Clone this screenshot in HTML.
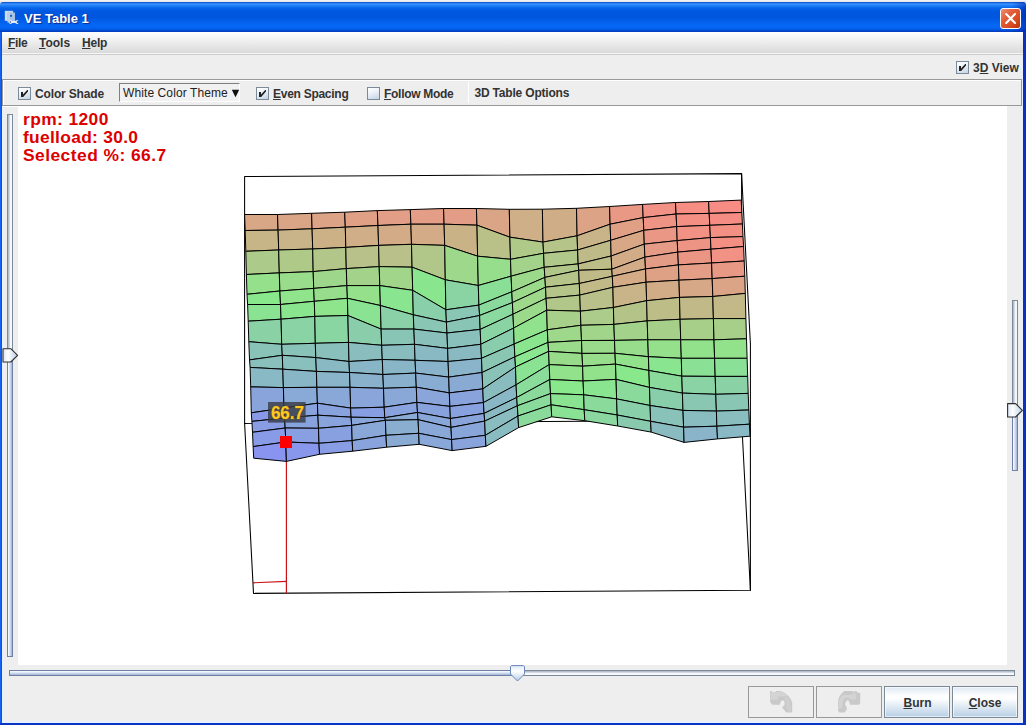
<!DOCTYPE html>
<html><head><meta charset="utf-8"><title>VE Table 1</title>
<style>
html,body{margin:0;padding:0;}
body{width:1026px;height:725px;overflow:hidden;position:relative;background:#0b3fd0;
 font-family:"Liberation Sans",sans-serif;font-size:12px;color:#333;}
.abs{position:absolute;}
#topstrip{left:0;top:0;width:1026px;height:9px;background:linear-gradient(#f6f6f6 0,#e4e4e4 2px,#e8eefc 3px,#e8eefc 9px);}
#title{left:0;top:2px;width:1026px;height:30px;border-radius:3px 3px 0 0;
 background:linear-gradient(#0a4ac4 0%,#1f6ee8 3%,#3993ff 7%,#2280f8 12%,#0665ea 20%,#0058e0 30%,#0056de 50%,#035fea 65%,#0468f6 78%,#0462ee 88%,#0350d8 94%,#0238b8 100%);}
#ttext{left:24px;top:11px;font-size:13px;color:#fff;white-space:nowrap;text-shadow:1px 1px 1px #0a2a8c;line-height:15px;font-weight:bold;}
#close{left:1000px;top:8px;width:19px;height:19px;border:1px solid #fff;border-radius:3px;
 background:linear-gradient(135deg,#ee8f74 0%,#e2603c 35%,#d84a22 70%,#b8300c 100%);}
#lborder{left:0;top:32px;width:2px;height:693px;background:linear-gradient(90deg,#1a6af8,#0a4ad0);}
#llight{left:2px;top:32px;width:1px;height:689px;background:#e4f2ff;}
#rborder{left:1023px;top:32px;width:3px;height:693px;background:#0a30c0;}
#bborder{left:0;top:723px;width:1026px;height:2px;background:#0a35c4;}
#content{left:2px;top:32px;width:1021px;height:691px;background:#eeeeee;}
#rlight{left:1020px;top:32px;width:3px;height:691px;background:linear-gradient(90deg,#eeeeee,#e6f0ff);}
#blight{left:2px;top:721px;width:1021px;height:2px;background:#e6f0ff;}
#menubar{left:2px;top:32px;width:1021px;height:21px;background:linear-gradient(#ffffff,#dadada);}
#menusep{left:2px;top:53px;width:1021px;height:2px;background:linear-gradient(#f6f6f6 50%,#cccccc 50%);}
.menu{top:36px;font-weight:bold;font-size:12px;line-height:14px;white-space:nowrap;color:#333;}
.u{text-decoration:underline;}
.lbl{font-weight:bold;font-size:12px;line-height:14px;white-space:nowrap;color:#333;}
.cb{width:11px;height:11px;border:1px solid #7a8a99;background:linear-gradient(160deg,#ffffff 0%,#eef3f9 40%,#c3d3e4 100%);}
#toolbar{left:2px;top:79px;width:1020px;height:27px;border:1px solid #989898;box-sizing:border-box;box-shadow:inset 0 1px 0 #fff, inset 1px 0 0 #fff;}
#combo{left:119px;top:83px;width:121px;height:19px;box-sizing:border-box;border-top:1px solid #7f7f7f;border-left:1px solid #7f7f7f;border-right:1px solid #fff;border-bottom:1px solid #fff;background:#f1f1f1;}
#combotext{left:123px;top:86px;font-size:12px;line-height:14px;white-space:nowrap;color:#222;letter-spacing:0.1px;}
#canvas{left:18px;top:106px;width:989px;height:559px;background:#fff;}
.btn{top:686px;width:64px;height:30px;border:1px solid #7a8a99;font-weight:bold;font-size:12px;text-align:center;line-height:32px;
 background:linear-gradient(#dfe9f4 0%,#ffffff 30%,#ffffff 38%,#b8cfe5 100%);box-shadow:inset 0 0 0 1px rgba(255,255,255,0.6);}
.btnd{top:686px;width:64px;height:30px;border:1px solid #999;background:#eeeeee;}
svg{position:absolute;left:0;top:0;}
.info{left:23px;font-weight:bold;font-size:17.4px;line-height:18px;color:#dc0000;white-space:nowrap;}
#tright{left:1012px;top:2px;width:14px;height:30px;border-radius:0 3px 0 0;background:linear-gradient(90deg,rgba(0,30,160,0),rgba(0,30,160,0.55));}

</style></head>
<body>
<div class="abs" id="topstrip"></div>
<div class="abs" id="title"></div>
<div class="abs" id="ttext">VE Table 1</div>
<div class="abs" id="tright"></div>
<div class="abs" id="close"></div>
<div class="abs" id="content"></div>
<div class="abs" id="rlight"></div>
<div class="abs" id="blight"></div>
<div class="abs" id="llight"></div>
<div class="abs" id="lborder"></div>
<div class="abs" id="rborder"></div>
<div class="abs" id="bborder"></div>
<div class="abs" id="menubar"></div>
<div class="abs" id="menusep"></div>
<div class="abs menu" style="left:8px;letter-spacing:-0.3px"><span class="u">F</span>ile</div>
<div class="abs menu" style="left:39px"><span class="u">T</span>ools</div>
<div class="abs menu" style="left:82px;letter-spacing:-0.2px"><span class="u">H</span>elp</div>

<div class="abs cb" style="left:956px;top:61px"></div>
<div class="abs lbl" id="l3d" style="left:973px;top:61px">3<span class="u">D</span> View</div>

<div class="abs" id="toolbar"></div>
<div class="abs cb" style="left:18px;top:87px"></div>
<div class="abs lbl" id="lcs" style="left:35px;top:87px;letter-spacing:-0.15px">Color Shade</div>
<div class="abs" id="combo"></div>
<div class="abs" id="combotext">White Color Theme</div>
<div class="abs cb" style="left:256px;top:87px"></div>
<div class="abs lbl" id="les" style="left:273px;top:87px;letter-spacing:-0.27px"><span class="u">E</span>ven Spacing</div>
<div class="abs cb" style="left:367px;top:87px"></div>
<div class="abs lbl" id="lfm" style="left:384px;top:87px;letter-spacing:-0.29px"><span class="u">F</span>ollow Mode</div>
<div class="abs" style="left:468px;top:82px;width:1px;height:21px;background:#fff"></div>
<div class="abs lbl" id="lopt" style="left:474.5px;top:86px;letter-spacing:-0.19px">3D Table Options</div>

<div class="abs" id="canvas"></div>
<div class="abs" style="left:3px;top:106px;width:15px;height:1px;background:#fff"></div>
<div class="abs info" id="i1" style="top:110px;letter-spacing:0.4px">rpm: 1200</div>
<div class="abs info" id="i2" style="top:128px;letter-spacing:0.3px">fuelload: 30.0</div>
<div class="abs info" id="i3" style="top:146px;letter-spacing:0.46px">Selected %: 66.7</div>

<div class="abs btnd" style="left:748px"></div>
<div class="abs btnd" style="left:816px"></div>
<div class="abs btn" style="left:884px;text-indent:1px"><span class="u">B</span>urn</div>
<div class="abs btn" style="left:952px"><span class="u">C</span>lose</div>

<svg width="1026" height="725" viewBox="0 0 1026 725">
<defs>
 <linearGradient id="gth" x1="0" y1="0" x2="1" y2="0"><stop offset="0" stop-color="#dbe6f3"/><stop offset="0.35" stop-color="#ffffff"/><stop offset="1" stop-color="#b8cfe5"/></linearGradient>
 <linearGradient id="gtv" x1="0" y1="0" x2="0" y2="1"><stop offset="0" stop-color="#dbe6f3"/><stop offset="0.35" stop-color="#ffffff"/><stop offset="1" stop-color="#b8cfe5"/></linearGradient>
 <linearGradient id="gfh" x1="0" y1="0" x2="1" y2="0"><stop offset="0" stop-color="#ffffff"/><stop offset="0.35" stop-color="#e6eefa"/><stop offset="1" stop-color="#93a8cf"/></linearGradient>
 <linearGradient id="gfv" x1="0" y1="0" x2="0" y2="1"><stop offset="0" stop-color="#ffffff"/><stop offset="0.35" stop-color="#e6eefa"/><stop offset="1" stop-color="#93a8cf"/></linearGradient>
</defs>

<!-- box behind mesh -->
<g fill="none" stroke="#000" stroke-width="1.05" stroke-linecap="round" stroke-linejoin="round">
 <path d="M244.6,423.4 L244.6,176.5 L741.6,173.6 L741.6,420"/>
 <path d="M244.6,423.4 L741.6,420.2"/>
 <path d="M244.6,423.4 L253.5,593.4 L750.4,590.2 L741.6,420.2"/>
 <path d="M741.6,173.6 L750.4,344 L750.4,590.2"/>
</g>
<!-- red drop lines -->
<g>
 <path d="M286.4,442 L286.4,593.2" stroke="#c81414" stroke-width="1.2" fill="none"/>
 <path d="M252.9,582.8 L286.4,581.3" stroke="#c81414" stroke-width="1.2" fill="none"/>
</g>
<!-- mesh -->
<g stroke="#000" stroke-width="1.0" stroke-linejoin="round">
<polygon points="244.6,214.5 277.5,214.5 278.1,230.1 245.2,230.5" fill="rgb(216,167,134)"/>
<polygon points="277.5,214.5 311.6,213.3 312.1,228.8 278.1,230.1" fill="rgb(217,165,134)"/>
<polygon points="311.6,213.3 344.7,212.2 345.3,227.2 312.1,228.8" fill="rgb(220,163,134)"/>
<polygon points="344.7,212.2 377.3,210.6 378.0,225.5 345.3,227.2" fill="rgb(223,160,134)"/>
<polygon points="377.3,210.6 410.3,209.6 410.9,224.2 378.0,225.5" fill="rgb(226,158,134)"/>
<polygon points="410.3,209.6 443.6,208.5 444.1,224.2 410.9,224.2" fill="rgb(228,157,134)"/>
<polygon points="443.6,208.5 476.4,208.5 477.0,225.2 444.1,224.2" fill="rgb(227,157,134)"/>
<polygon points="476.4,208.5 509.3,209.3 509.9,237.2 477.0,225.2" fill="rgb(218,165,134)"/>
<polygon points="509.3,209.3 542.4,209.2 543.0,242.1 509.9,237.2" fill="rgb(206,175,135)"/>
<polygon points="542.4,209.2 576.5,208.3 577.1,235.8 543.0,242.1" fill="rgb(207,174,135)"/>
<polygon points="576.5,208.3 609.6,206.5 610.1,224.2 577.1,235.8" fill="rgb(220,163,134)"/>
<polygon points="609.6,206.5 642.6,204.4 643.2,217.6 610.1,224.2" fill="rgb(233,152,133)"/>
<polygon points="642.6,204.4 675.5,202.5 676.1,214.0 643.2,217.6" fill="rgb(242,145,133)"/>
<polygon points="675.5,202.5 708.6,201.5 709.2,213.4 676.1,214.0" fill="rgb(246,142,132)"/>
<polygon points="708.6,201.5 741.2,200.1 741.8,212.5 709.2,213.4" fill="rgb(247,140,132)"/>
<polygon points="245.2,230.5 278.1,230.1 278.7,250.0 245.8,251.3" fill="rgb(199,181,136)"/>
<polygon points="278.1,230.1 312.1,228.8 312.7,249.0 278.7,250.0" fill="rgb(201,179,136)"/>
<polygon points="312.1,228.8 345.3,227.2 345.8,247.4 312.7,249.0" fill="rgb(204,177,135)"/>
<polygon points="345.3,227.2 378.0,225.5 378.6,245.4 345.8,247.4" fill="rgb(208,174,135)"/>
<polygon points="378.0,225.5 410.9,224.2 411.5,244.3 378.6,245.4" fill="rgb(211,171,135)"/>
<polygon points="410.9,224.2 444.1,224.2 444.7,245.4 411.5,244.3" fill="rgb(211,171,135)"/>
<polygon points="444.1,224.2 477.0,225.2 477.6,256.2 444.7,245.4" fill="rgb(202,178,135)"/>
<polygon points="477.0,225.2 509.9,237.2 510.5,259.3 477.6,256.2" fill="rgb(185,193,137)"/>
<polygon points="509.9,237.2 543.0,242.1 543.6,253.3 510.5,259.3" fill="rgb(175,201,137)"/>
<polygon points="543.0,242.1 577.1,235.8 577.6,250.0 543.6,253.3" fill="rgb(181,196,137)"/>
<polygon points="577.1,235.8 610.1,224.2 610.7,240.3 577.6,250.0" fill="rgb(200,180,136)"/>
<polygon points="610.1,224.2 643.2,217.6 643.8,230.3 610.7,240.3" fill="rgb(224,160,134)"/>
<polygon points="643.2,217.6 676.1,214.0 676.7,226.6 643.8,230.3" fill="rgb(239,147,133)"/>
<polygon points="676.1,214.0 709.2,213.4 709.8,225.3 676.7,226.6" fill="rgb(244,143,132)"/>
<polygon points="709.2,213.4 741.8,212.5 742.4,224.0 709.8,225.3" fill="rgb(246,141,132)"/>
<polygon points="245.8,251.3 278.7,250.0 279.3,272.9 246.4,274.5" fill="rgb(172,203,138)"/>
<polygon points="278.7,250.0 312.7,249.0 313.2,271.6 279.3,272.9" fill="rgb(175,201,137)"/>
<polygon points="312.7,249.0 345.8,247.4 346.3,268.6 313.2,271.6" fill="rgb(179,198,137)"/>
<polygon points="345.8,247.4 378.6,245.4 379.2,266.6 346.3,268.6" fill="rgb(184,193,137)"/>
<polygon points="378.6,245.4 411.5,244.3 412.1,267.2 379.2,266.6" fill="rgb(186,192,137)"/>
<polygon points="411.5,244.3 444.7,245.4 445.3,279.8 412.1,267.2" fill="rgb(177,199,137)"/>
<polygon points="444.7,245.4 477.6,256.2 478.3,285.5 445.3,279.8" fill="rgb(157,216,139)"/>
<polygon points="477.6,256.2 510.5,259.3 511.1,276.2 478.3,285.5" fill="rgb(150,222,139)"/>
<polygon points="510.5,259.3 543.6,253.3 544.2,267.3 511.1,276.2" fill="rgb(163,211,138)"/>
<polygon points="543.6,253.3 577.6,250.0 578.2,263.9 544.2,267.3" fill="rgb(176,200,137)"/>
<polygon points="577.6,250.0 610.7,240.3 611.2,256.0 578.2,263.9" fill="rgb(191,187,136)"/>
<polygon points="610.7,240.3 643.8,230.3 644.3,244.1 611.2,256.0" fill="rgb(216,167,134)"/>
<polygon points="643.8,230.3 676.7,226.6 677.2,240.6 644.3,244.1" fill="rgb(234,152,133)"/>
<polygon points="676.7,226.6 709.8,225.3 710.4,237.6 677.2,240.6" fill="rgb(241,146,133)"/>
<polygon points="709.8,225.3 742.4,224.0 743.0,236.6 710.4,237.6" fill="rgb(244,143,132)"/>
<polygon points="246.4,274.5 279.3,272.9 279.9,291.0 247.0,294.3" fill="rgb(148,224,139)"/>
<polygon points="279.3,272.9 313.2,271.6 313.7,288.4 279.9,291.0" fill="rgb(153,220,139)"/>
<polygon points="313.2,271.6 346.3,268.6 346.9,285.6 313.7,288.4" fill="rgb(158,215,139)"/>
<polygon points="346.3,268.6 379.2,266.6 379.8,285.6 346.9,285.6" fill="rgb(163,211,138)"/>
<polygon points="379.2,266.6 412.1,267.2 412.7,290.3 379.8,285.6" fill="rgb(160,213,138)"/>
<polygon points="412.1,267.2 445.3,279.8 445.9,309.8 412.7,290.3" fill="rgb(138,230,142)"/>
<polygon points="445.3,279.8 478.3,285.5 478.9,305.1 445.9,309.8" fill="rgb(138,212,163)"/>
<polygon points="478.3,285.5 511.1,276.2 511.8,291.8 478.9,305.1" fill="rgb(138,223,150)"/>
<polygon points="511.1,276.2 544.2,267.3 544.9,277.4 511.8,291.8" fill="rgb(156,217,139)"/>
<polygon points="544.2,267.3 578.2,263.9 578.7,270.3 544.9,277.4" fill="rgb(177,199,137)"/>
<polygon points="578.2,263.9 611.2,256.0 611.8,269.2 578.7,270.3" fill="rgb(189,189,136)"/>
<polygon points="611.2,256.0 644.3,244.1 644.9,257.1 611.8,269.2" fill="rgb(209,172,135)"/>
<polygon points="644.3,244.1 677.2,240.6 677.8,252.1 644.9,257.1" fill="rgb(229,155,133)"/>
<polygon points="677.2,240.6 710.4,237.6 711.0,249.2 677.8,252.1" fill="rgb(238,148,133)"/>
<polygon points="710.4,237.6 743.0,236.6 743.6,246.5 711.0,249.2" fill="rgb(244,143,132)"/>
<polygon points="247.0,294.3 279.9,291.0 280.5,304.5 247.6,304.5" fill="rgb(138,232,140)"/>
<polygon points="279.9,291.0 313.7,288.4 314.3,301.3 280.5,304.5" fill="rgb(143,228,140)"/>
<polygon points="313.7,288.4 346.9,285.6 347.4,298.3 314.3,301.3" fill="rgb(150,222,139)"/>
<polygon points="346.9,285.6 379.8,285.6 380.4,305.5 347.4,298.3" fill="rgb(148,224,139)"/>
<polygon points="379.8,285.6 412.7,290.3 413.3,314.8 380.4,305.5" fill="rgb(138,229,144)"/>
<polygon points="412.7,290.3 445.9,309.8 446.4,322.1 413.3,314.8" fill="rgb(137,207,170)"/>
<polygon points="445.9,309.8 478.9,305.1 479.6,315.5 446.4,322.1" fill="rgb(137,198,180)"/>
<polygon points="478.9,305.1 511.8,291.8 512.4,302.6 479.6,315.5" fill="rgb(138,217,157)"/>
<polygon points="511.8,291.8 544.9,277.4 545.5,287.2 512.4,302.6" fill="rgb(155,217,139)"/>
<polygon points="544.9,277.4 578.7,270.3 579.3,283.5 545.5,287.2" fill="rgb(181,196,137)"/>
<polygon points="578.7,270.3 611.8,269.2 612.3,276.3 579.3,283.5" fill="rgb(192,186,136)"/>
<polygon points="611.8,269.2 644.9,257.1 645.5,268.9 612.3,276.3" fill="rgb(209,172,135)"/>
<polygon points="644.9,257.1 677.8,252.1 678.4,264.9 645.5,268.9" fill="rgb(227,157,134)"/>
<polygon points="677.8,252.1 711.0,249.2 711.6,263.0 678.4,264.9" fill="rgb(235,150,133)"/>
<polygon points="711.0,249.2 743.6,246.5 744.2,261.0 711.6,263.0" fill="rgb(241,146,133)"/>
<polygon points="247.6,304.5 280.5,304.5 281.1,319.2 248.2,321.2" fill="rgb(138,227,146)"/>
<polygon points="280.5,304.5 314.3,301.3 314.8,316.4 281.1,319.2" fill="rgb(138,230,142)"/>
<polygon points="314.3,301.3 347.4,298.3 347.9,315.5 314.8,316.4" fill="rgb(142,229,140)"/>
<polygon points="347.4,298.3 380.4,305.5 381.1,329.1 347.9,315.5" fill="rgb(138,226,147)"/>
<polygon points="380.4,305.5 413.3,314.8 413.9,329.1 381.1,329.1" fill="rgb(138,209,167)"/>
<polygon points="413.3,314.8 446.4,322.1 447.0,333.0 413.9,329.1" fill="rgb(137,198,180)"/>
<polygon points="446.4,322.1 479.6,315.5 480.2,329.4 447.0,333.0" fill="rgb(137,197,181)"/>
<polygon points="479.6,315.5 512.4,302.6 513.0,314.2 480.2,329.4" fill="rgb(138,217,158)"/>
<polygon points="512.4,302.6 545.5,287.2 546.1,298.3 513.0,314.2" fill="rgb(157,216,139)"/>
<polygon points="545.5,287.2 579.3,283.5 579.8,295.1 546.1,298.3" fill="rgb(181,196,137)"/>
<polygon points="579.3,283.5 612.3,276.3 612.9,287.3 579.8,295.1" fill="rgb(194,185,136)"/>
<polygon points="612.3,276.3 645.5,268.9 646.1,282.2 612.9,287.3" fill="rgb(211,171,135)"/>
<polygon points="645.5,268.9 678.4,264.9 679.0,280.2 646.1,282.2" fill="rgb(222,161,134)"/>
<polygon points="678.4,264.9 711.6,263.0 712.2,278.6 679.0,280.2" fill="rgb(228,157,134)"/>
<polygon points="711.6,263.0 744.2,261.0 744.8,276.2 712.2,278.6" fill="rgb(232,153,133)"/>
<polygon points="248.2,321.2 281.1,319.2 281.7,344.3 248.8,341.7" fill="rgb(138,210,166)"/>
<polygon points="281.1,319.2 314.8,316.4 315.3,343.3 281.7,344.3" fill="rgb(138,211,164)"/>
<polygon points="314.8,316.4 347.9,315.5 348.5,342.4 315.3,343.3" fill="rgb(138,214,162)"/>
<polygon points="347.9,315.5 381.1,329.1 381.7,345.3 348.5,342.4" fill="rgb(137,205,171)"/>
<polygon points="381.1,329.1 413.9,329.1 414.5,344.3 381.7,345.3" fill="rgb(137,197,181)"/>
<polygon points="413.9,329.1 447.0,333.0 447.6,348.4 414.5,344.3" fill="rgb(137,193,186)"/>
<polygon points="447.0,333.0 480.2,329.4 480.8,344.3 447.6,348.4" fill="rgb(137,192,187)"/>
<polygon points="480.2,329.4 513.0,314.2 513.6,328.1 480.8,344.3" fill="rgb(138,212,163)"/>
<polygon points="513.0,314.2 546.1,298.3 546.7,310.2 513.6,328.1" fill="rgb(155,218,139)"/>
<polygon points="546.1,298.3 579.8,295.1 580.4,311.2 546.7,310.2" fill="rgb(177,199,137)"/>
<polygon points="579.8,295.1 612.9,287.3 613.4,307.5 580.4,311.2" fill="rgb(185,192,137)"/>
<polygon points="612.9,287.3 646.1,282.2 646.6,300.7 613.4,307.5" fill="rgb(200,180,136)"/>
<polygon points="646.1,282.2 679.0,280.2 679.5,297.4 646.6,300.7" fill="rgb(210,172,135)"/>
<polygon points="679.0,280.2 712.2,278.6 712.8,296.5 679.5,297.4" fill="rgb(214,168,135)"/>
<polygon points="712.2,278.6 744.8,276.2 745.3,293.4 712.8,296.5" fill="rgb(219,164,134)"/>
<polygon points="248.8,341.7 281.7,344.3 282.3,355.3 249.5,359.9" fill="rgb(137,195,184)"/>
<polygon points="281.7,344.3 315.3,343.3 315.8,357.6 282.3,355.3" fill="rgb(137,194,184)"/>
<polygon points="315.3,343.3 348.5,342.4 349.0,361.5 315.8,357.6" fill="rgb(137,192,187)"/>
<polygon points="348.5,342.4 381.7,345.3 382.3,359.5 349.0,361.5" fill="rgb(137,189,190)"/>
<polygon points="381.7,345.3 414.5,344.3 415.1,360.3 382.3,359.5" fill="rgb(137,188,191)"/>
<polygon points="414.5,344.3 447.6,348.4 448.1,361.5 415.1,360.3" fill="rgb(137,185,195)"/>
<polygon points="447.6,348.4 480.8,344.3 481.5,358.3 448.1,361.5" fill="rgb(137,186,194)"/>
<polygon points="480.8,344.3 513.6,328.1 514.2,344.0 481.5,358.3" fill="rgb(137,205,172)"/>
<polygon points="513.6,328.1 546.7,310.2 547.3,329.8 514.2,344.0" fill="rgb(145,226,140)"/>
<polygon points="546.7,310.2 580.4,311.2 580.9,325.3 547.3,329.8" fill="rgb(167,208,138)"/>
<polygon points="580.4,311.2 613.4,307.5 613.9,324.4 580.9,325.3" fill="rgb(171,204,138)"/>
<polygon points="613.4,307.5 646.6,300.7 647.2,320.9 613.9,324.4" fill="rgb(180,196,137)"/>
<polygon points="646.6,300.7 679.5,297.4 680.1,319.3 647.2,320.9" fill="rgb(189,189,136)"/>
<polygon points="679.5,297.4 712.8,296.5 713.4,318.6 680.1,319.3" fill="rgb(193,186,136)"/>
<polygon points="712.8,296.5 745.3,293.4 745.9,318.6 713.4,318.6" fill="rgb(195,184,136)"/>
<polygon points="249.5,359.9 282.3,355.3 282.8,369.2 250.1,367.4" fill="rgb(137,192,187)"/>
<polygon points="282.3,355.3 315.8,357.6 316.4,371.4 282.8,369.2" fill="rgb(137,191,189)"/>
<polygon points="315.8,357.6 349.0,361.5 349.5,372.5 316.4,371.4" fill="rgb(137,185,195)"/>
<polygon points="349.0,361.5 382.3,359.5 382.9,374.5 349.5,372.5" fill="rgb(137,182,199)"/>
<polygon points="382.3,359.5 415.1,360.3 415.7,373.1 382.9,374.5" fill="rgb(137,182,199)"/>
<polygon points="415.1,360.3 448.1,361.5 448.7,377.1 415.7,373.1" fill="rgb(137,179,202)"/>
<polygon points="448.1,361.5 481.5,358.3 482.1,372.5 448.7,377.1" fill="rgb(137,180,201)"/>
<polygon points="481.5,358.3 514.2,344.0 514.9,356.8 482.1,372.5" fill="rgb(137,199,179)"/>
<polygon points="514.2,344.0 547.3,329.8 548.0,342.4 514.9,356.8" fill="rgb(138,229,143)"/>
<polygon points="547.3,329.8 580.9,325.3 581.5,340.5 548.0,342.4" fill="rgb(157,216,139)"/>
<polygon points="580.9,325.3 613.9,324.4 614.5,340.4 581.5,340.5" fill="rgb(161,213,138)"/>
<polygon points="613.9,324.4 647.2,320.9 647.8,339.8 614.5,340.4" fill="rgb(163,211,138)"/>
<polygon points="647.2,320.9 680.1,319.3 680.7,339.8 647.8,339.8" fill="rgb(166,208,138)"/>
<polygon points="680.1,319.3 713.4,318.6 714.0,339.8 680.7,339.8" fill="rgb(167,207,138)"/>
<polygon points="713.4,318.6 745.9,318.6 746.5,338.8 714.0,339.8" fill="rgb(168,207,138)"/>
<polygon points="250.1,367.4 282.8,369.2 283.4,387.6 250.7,386.9" fill="rgb(137,185,196)"/>
<polygon points="282.8,369.2 316.4,371.4 316.9,387.3 283.4,387.6" fill="rgb(137,182,199)"/>
<polygon points="316.4,371.4 349.5,372.5 350.1,387.3 316.9,387.3" fill="rgb(137,180,201)"/>
<polygon points="349.5,372.5 382.9,374.5 383.5,388.3 350.1,387.3" fill="rgb(137,177,204)"/>
<polygon points="382.9,374.5 415.7,373.1 416.3,387.2 383.5,388.3" fill="rgb(137,176,205)"/>
<polygon points="415.7,373.1 448.7,377.1 449.3,392.9 416.3,387.2" fill="rgb(137,172,210)"/>
<polygon points="448.7,377.1 482.1,372.5 482.8,388.9 449.3,392.9" fill="rgb(137,171,211)"/>
<polygon points="482.1,372.5 514.9,356.8 515.5,367.0 482.8,388.9" fill="rgb(137,195,184)"/>
<polygon points="514.9,356.8 548.0,342.4 548.6,351.4 515.5,367.0" fill="rgb(138,230,143)"/>
<polygon points="548.0,342.4 581.5,340.5 582.0,353.4 548.6,351.4" fill="rgb(154,219,139)"/>
<polygon points="581.5,340.5 614.5,340.4 615.0,353.3 582.0,353.4" fill="rgb(153,219,139)"/>
<polygon points="614.5,340.4 647.8,339.8 648.4,356.7 615.0,353.3" fill="rgb(151,221,139)"/>
<polygon points="647.8,339.8 680.7,339.8 681.3,358.3 648.4,356.7" fill="rgb(148,224,139)"/>
<polygon points="680.7,339.8 714.0,339.8 714.6,358.3 681.3,358.3" fill="rgb(146,225,139)"/>
<polygon points="714.0,339.8 746.5,338.8 747.1,358.3 714.6,358.3" fill="rgb(146,225,139)"/>
<polygon points="250.7,386.9 283.4,387.6 284.0,408.0 251.3,412.8" fill="rgb(137,164,219)"/>
<polygon points="283.4,387.6 316.9,387.3 317.4,403.2 284.0,408.0" fill="rgb(137,169,214)"/>
<polygon points="316.9,387.3 350.1,387.3 350.6,408.1 317.4,403.2" fill="rgb(137,168,215)"/>
<polygon points="350.1,387.3 383.5,388.3 384.2,407.2 350.6,408.1" fill="rgb(137,165,218)"/>
<polygon points="383.5,388.3 416.3,387.2 416.9,402.4 384.2,407.2" fill="rgb(137,168,215)"/>
<polygon points="416.3,387.2 449.3,392.9 449.9,406.4 416.9,402.4" fill="rgb(137,165,218)"/>
<polygon points="449.3,392.9 482.8,388.9 483.4,402.6 449.9,406.4" fill="rgb(137,164,220)"/>
<polygon points="482.8,388.9 515.5,367.0 516.1,384.8 483.4,402.6" fill="rgb(137,188,191)"/>
<polygon points="515.5,367.0 548.6,351.4 549.2,364.6 516.1,384.8" fill="rgb(138,227,146)"/>
<polygon points="548.6,351.4 582.0,353.4 582.6,366.2 549.2,364.6" fill="rgb(152,220,139)"/>
<polygon points="582.0,353.4 615.0,353.3 615.5,364.1 582.6,366.2" fill="rgb(151,221,139)"/>
<polygon points="615.0,353.3 648.4,356.7 648.9,370.5 615.5,364.1" fill="rgb(145,226,139)"/>
<polygon points="648.4,356.7 681.3,358.3 681.8,376.2 648.9,370.5" fill="rgb(138,229,144)"/>
<polygon points="681.3,358.3 714.6,358.3 715.2,376.4 681.8,376.2" fill="rgb(138,224,149)"/>
<polygon points="714.6,358.3 747.1,358.3 747.7,376.4 715.2,376.4" fill="rgb(138,224,150)"/>
<polygon points="251.3,412.8 284.0,408.0 284.6,418.0 251.9,421.4" fill="rgb(136,154,231)"/>
<polygon points="284.0,408.0 317.4,403.2 317.9,415.2 284.6,418.0" fill="rgb(136,162,222)"/>
<polygon points="317.4,403.2 350.6,408.1 351.1,417.2 317.9,415.2" fill="rgb(136,162,222)"/>
<polygon points="350.6,408.1 384.2,407.2 384.8,417.7 351.1,417.2" fill="rgb(136,158,227)"/>
<polygon points="384.2,407.2 416.9,402.4 417.5,412.5 384.8,417.7" fill="rgb(136,163,221)"/>
<polygon points="416.9,402.4 449.9,406.4 450.4,418.5 417.5,412.5" fill="rgb(136,162,222)"/>
<polygon points="449.9,406.4 483.4,402.6 484.1,413.4 450.4,418.5" fill="rgb(136,161,223)"/>
<polygon points="483.4,402.6 516.1,384.8 516.7,397.5 484.1,413.4" fill="rgb(137,183,197)"/>
<polygon points="516.1,384.8 549.2,364.6 549.8,379.5 516.7,397.5" fill="rgb(138,220,154)"/>
<polygon points="549.2,364.6 582.6,366.2 583.1,381.0 549.8,379.5" fill="rgb(146,226,139)"/>
<polygon points="582.6,366.2 615.5,364.1 616.1,379.4 583.1,381.0" fill="rgb(145,226,139)"/>
<polygon points="615.5,364.1 648.9,370.5 649.5,387.4 616.1,379.4" fill="rgb(138,232,140)"/>
<polygon points="648.9,370.5 681.8,376.2 682.4,393.1 649.5,387.4" fill="rgb(138,218,156)"/>
<polygon points="681.8,376.2 715.2,376.4 715.8,394.3 682.4,393.1" fill="rgb(138,211,165)"/>
<polygon points="715.2,376.4 747.7,376.4 748.2,393.4 715.8,394.3" fill="rgb(138,210,166)"/>
<polygon points="251.9,421.4 284.6,418.0 285.2,428.0 252.5,432.3" fill="rgb(136,157,228)"/>
<polygon points="284.6,418.0 317.9,415.2 318.5,428.3 285.2,428.0" fill="rgb(136,162,222)"/>
<polygon points="317.9,415.2 351.1,417.2 351.7,425.4 318.5,428.3" fill="rgb(137,163,221)"/>
<polygon points="351.1,417.2 384.8,417.7 385.4,420.3 351.7,425.4" fill="rgb(137,166,218)"/>
<polygon points="384.8,417.7 417.5,412.5 418.1,419.7 385.4,420.3" fill="rgb(137,171,212)"/>
<polygon points="417.5,412.5 450.4,418.5 451.0,427.4 418.1,419.7" fill="rgb(137,166,217)"/>
<polygon points="450.4,418.5 484.1,413.4 484.7,421.1 451.0,427.4" fill="rgb(137,164,219)"/>
<polygon points="484.1,413.4 516.7,397.5 517.3,405.8 484.7,421.1" fill="rgb(137,186,194)"/>
<polygon points="516.7,397.5 549.8,379.5 550.5,393.6 517.3,405.8" fill="rgb(138,218,156)"/>
<polygon points="549.8,379.5 583.1,381.0 583.7,394.8 550.5,393.6" fill="rgb(138,232,140)"/>
<polygon points="583.1,381.0 616.1,379.4 616.6,398.9 583.7,394.8" fill="rgb(138,229,144)"/>
<polygon points="616.1,379.4 649.5,387.4 650.1,405.5 616.6,398.9" fill="rgb(138,219,155)"/>
<polygon points="649.5,387.4 682.4,393.1 683.0,410.4 650.1,405.5" fill="rgb(137,206,171)"/>
<polygon points="682.4,393.1 715.8,394.3 716.4,411.1 683.0,410.4" fill="rgb(137,199,179)"/>
<polygon points="715.8,394.3 748.2,393.4 748.8,410.0 716.4,411.1" fill="rgb(137,198,180)"/>
<polygon points="252.5,432.3 285.2,428.0 285.8,442.0 253.1,446.6" fill="rgb(136,155,230)"/>
<polygon points="285.2,428.0 318.5,428.3 319.0,443.3 285.8,442.0" fill="rgb(136,159,226)"/>
<polygon points="318.5,428.3 351.7,425.4 352.2,440.6 319.0,443.3" fill="rgb(136,160,224)"/>
<polygon points="351.7,425.4 385.4,420.3 386.0,435.3 352.2,440.6" fill="rgb(137,168,215)"/>
<polygon points="385.4,420.3 418.1,419.7 418.7,433.3 386.0,435.3" fill="rgb(137,174,208)"/>
<polygon points="418.1,419.7 451.0,427.4 451.6,439.6 418.7,433.3" fill="rgb(137,168,215)"/>
<polygon points="451.0,427.4 484.7,421.1 485.3,435.3 451.6,439.6" fill="rgb(137,166,218)"/>
<polygon points="484.7,421.1 517.3,405.8 518.0,416.0 485.3,435.3" fill="rgb(137,189,191)"/>
<polygon points="517.3,405.8 550.5,393.6 551.1,404.8 518.0,416.0" fill="rgb(138,219,155)"/>
<polygon points="550.5,393.6 583.7,394.8 584.2,409.7 551.1,404.8" fill="rgb(138,227,145)"/>
<polygon points="583.7,394.8 616.6,398.9 617.2,415.0 584.2,409.7" fill="rgb(138,219,155)"/>
<polygon points="616.6,398.9 650.1,405.5 650.6,421.3 617.2,415.0" fill="rgb(137,207,170)"/>
<polygon points="650.1,405.5 683.0,410.4 683.6,427.2 650.6,421.3" fill="rgb(137,194,185)"/>
<polygon points="683.0,410.4 716.4,411.1 716.9,426.2 683.6,427.2" fill="rgb(137,188,192)"/>
<polygon points="716.4,411.1 748.8,410.0 749.4,424.2 716.9,426.2" fill="rgb(137,189,190)"/>
<polygon points="253.1,446.6 285.8,442.0 286.4,461.4 253.7,458.2" fill="rgb(136,148,239)"/>
<polygon points="285.8,442.0 319.0,443.3 319.5,454.3 286.4,461.4" fill="rgb(136,151,235)"/>
<polygon points="319.0,443.3 352.2,440.6 352.7,451.2 319.5,454.3" fill="rgb(136,157,228)"/>
<polygon points="352.2,440.6 386.0,435.3 386.6,447.2 352.7,451.2" fill="rgb(137,164,220)"/>
<polygon points="386.0,435.3 418.7,433.3 419.2,444.3 386.6,447.2" fill="rgb(137,171,211)"/>
<polygon points="418.7,433.3 451.6,439.6 452.2,450.6 419.2,444.3" fill="rgb(137,167,217)"/>
<polygon points="451.6,439.6 485.3,435.3 486.0,446.3 452.2,450.6" fill="rgb(137,164,220)"/>
<polygon points="485.3,435.3 518.0,416.0 518.6,427.6 486.0,446.3" fill="rgb(137,188,192)"/>
<polygon points="518.0,416.0 551.1,404.8 551.7,416.8 518.6,427.6" fill="rgb(138,219,155)"/>
<polygon points="551.1,404.8 584.2,409.7 584.8,420.7 551.7,416.8" fill="rgb(138,226,148)"/>
<polygon points="584.2,409.7 617.2,415.0 617.7,426.0 584.8,420.7" fill="rgb(138,215,160)"/>
<polygon points="617.2,415.0 650.6,421.3 651.2,432.1 617.7,426.0" fill="rgb(137,202,175)"/>
<polygon points="650.6,421.3 683.6,427.2 684.1,442.4 651.2,432.1" fill="rgb(137,187,193)"/>
<polygon points="683.6,427.2 716.9,426.2 717.5,438.9 684.1,442.4" fill="rgb(137,180,201)"/>
<polygon points="716.9,426.2 749.4,424.2 750.0,436.2 717.5,438.9" fill="rgb(137,185,196)"/>
</g>
<!-- selection -->
<g>
 <rect x="280" y="436" width="12" height="12" fill="#ff0000"/>
 <rect x="268" y="402" width="37.6" height="20.6" fill="rgba(56,60,70,0.82)"/>
 <text x="270.9" y="418.8" font-family="Liberation Sans, sans-serif" font-weight="bold" font-size="18" textLength="33.2" lengthAdjust="spacingAndGlyphs" fill="#ffc81e" stroke="#8a6410" stroke-width="0.7" paint-order="stroke">66.7</text>
</g>

<!-- left vertical slider -->
<g>
 <rect x="7.5" y="114.5" width="5" height="542" fill="#f4f7fb" stroke="#7a8a99"/>
 <rect x="8" y="115" width="1.5" height="541" fill="#8a98a8" opacity="0.6"/>
 <rect x="7.5" y="360" width="5" height="296.5" fill="url(#gfh)" stroke="#6f80a6"/>
 <path d="M3,348.7 L10.8,348.7 L17.6,355.4 L10.8,362 L3,362 Z" fill="url(#gth)" stroke="#2e2e2e" stroke-width="1.1" stroke-linejoin="round"/>
</g>
<!-- right vertical slider -->
<g>
 <rect x="1012.5" y="300.5" width="5" height="170" fill="#f4f7fb" stroke="#7a8a99"/>
 <rect x="1013" y="301" width="1.5" height="169" fill="#8a98a8" opacity="0.6"/>
 <rect x="1012.5" y="414" width="5" height="56.5" fill="url(#gfh)" stroke="#6f80a6"/>
 <path d="M1007.6,403.6 L1015.6,403.6 L1022.4,410.3 L1015.6,417 L1007.6,417 Z" fill="url(#gth)" stroke="#2e2e2e" stroke-width="1.1" stroke-linejoin="round"/>
</g>
<!-- bottom horizontal slider -->
<g>
 <rect x="9.5" y="670.5" width="1005" height="5" fill="#f4f7fb" stroke="#7a8a99"/>
 <rect x="10" y="671" width="1004" height="1.5" fill="#8a98a8" opacity="0.6"/>
 <rect x="9.5" y="670.5" width="505" height="5" fill="url(#gfv)" stroke="#6f80a6"/>
 <path d="M511.5,665.6 L523.5,665.6 L524.5,666.6 L524.5,674 L517.5,681 L510.5,674 L510.5,666.6 Z" fill="url(#gtv)" stroke="#6b86bb" stroke-width="1" stroke-linejoin="round"/>
</g>

<!-- checkmarks -->
<g id="chk" fill="#222" stroke="#222">
 <g transform="translate(18,87)"><path d="M3,5.1 L5,5.1 L5,7.6 L9.2,3.1 L10,3.1 L10,4.4 L5.2,9.9 L3,9.9 Z" stroke="none"/></g>
 <g transform="translate(256,87)"><path d="M3,5.1 L5,5.1 L5,7.6 L9.2,3.1 L10,3.1 L10,4.4 L5.2,9.9 L3,9.9 Z" stroke="none"/></g>
 <g transform="translate(956,61)"><path d="M3,5.1 L5,5.1 L5,7.6 L9.2,3.1 L10,3.1 L10,4.4 L5.2,9.9 L3,9.9 Z" stroke="none"/></g>
</g>

<path d="M231.8,89.8 L239.2,89.8 L235.5,97.2 Z" fill="#111"/>
<!-- close X -->
<g stroke="#fff" stroke-width="2.1" stroke-linecap="round">
 <path d="M1006.2,14 L1015,23 M1015,14 L1006.2,23"/>
</g>

<!-- title icon -->
<g>
 <rect x="4.8" y="10.8" width="8.3" height="10.1" fill="#c2d5ea"/>
 <rect x="5.6" y="11.6" width="3" height="8.5" fill="#d6e4f2" opacity="0.8"/>
 <rect x="7.3" y="12.5" width="7.7" height="10" fill="#a6c3e6"/>
 <rect x="8" y="13.2" width="2" height="8" fill="#bdd3ee" opacity="0.8"/>
 <rect x="10.1" y="14.9" width="1.8" height="1.9" fill="#1c52b4"/>
 <path d="M10.4,20.2 Q8.6,20.4 8.6,22 Q8.6,23.8 10.6,23.9 Q11.8,23.6 12.4,23 L15.2,23 Q15.8,23.8 17,23.9 L18.2,23.9 L18.2,23 L16.9,22.9 L16.9,21.2 L18.2,21.1 L18.2,20.2 L17,20.2 Q15.8,20.3 15.2,21.1 L12.4,21.1 Q11.8,20.3 10.4,20.2 Z" fill="#e4ebf3"/>
 <rect x="9.7" y="21.2" width="1.3" height="1.7" fill="#5a76a8"/>
</g>

<!-- undo / redo icons -->
<g>
 <path d="M770.1,691 L771.7,691 L772.1,692.1 L775.5,692.1 L776.2,691 L780.7,691 L784.9,692.9 L788.6,696.2 L791,699.5 L792.2,702.8 L792.2,712.6 L786.3,712.6 L782.1,707.5 L784.6,704.7 L784.4,701.4 L783,700.2 L781.1,701.1 L779.7,704.7 L772.2,704.7 L770.1,701.8 Z" fill="#c9c9c9"/>
 <path d="M770.7,691.7 L776,692.6 L780.5,691.6 L784.3,693.4 L787.2,696.3 L777.9,696.6 L777.9,699.7 L770.7,699.7 Z" fill="#d4d4d4"/>
 <path d="M787.5,697 Q790.6,701 791,706 L791,712 L788,712 L786,707 Q786.5,700.5 783.5,698 Z" fill="#cfcfcf"/>
 <path d="M844.2,691 L852.4,691 L853.4,691.8 L855.5,691 L856.6,691 L856.9,692.2 L859.2,692.7 L860.2,693.4 L860.2,703.2 L859,704.7 L850.1,704.7 L848.7,700.4 L847.2,700.2 L845.4,702.8 L845.1,704.7 L846.8,707.5 L846.5,710.3 L844.4,712.6 L839.3,712.6 L838.1,710.8 L838.1,700 L839.7,695.7 L842.1,692.9 Z" fill="#c9c9c9"/>
 <path d="M842,695.3 L850,694.8 L855.7,692.5 L856.2,699.5 L850.6,699.5 L848.7,697.6 L844.4,698.1 L842.6,701.8 L842.1,707.5 L838.8,709.3 L838.8,700.5 Z" fill="#d4d4d4"/>
</g>
</svg>

</body></html>
